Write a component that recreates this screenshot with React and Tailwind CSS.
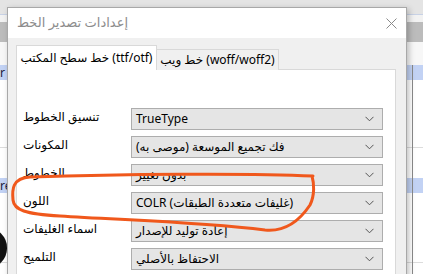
import React from 'react';

const FONT = { fontFamily: '"Segoe UI", "Noto Sans", "DejaVu Sans", sans-serif' };

// صفوف الإعدادات
const ROWS = [
    { label: 'تنسيق الخطوط', value: 'TrueType' },
    { label: 'المكونات', value: 'فك تجميع الموسعة (موصى به)' },
    { label: 'الخطوط', value: 'بدون تغيير' },
    { label: 'اللون', value: 'COLR (غليفات متعددة الطبقات)' },
    { label: 'اسماء الغليفات', value: 'إعادة توليد للإصدار' },
    { label: 'التلميح', value: 'الاحتفاظ بالأصلي' },
];

function Chevron() {
    return (
        <svg width="9" height="6" viewBox="0 0 9 6" className="shrink-0">
            <path d="M0.5 0.8 L4.5 4.8 L8.5 0.8" fill="none" stroke="#555" strokeWidth="1" />
        </svg>
    );
}

function Select({ value }) {
    return (
        <div className="w-[252px] h-[22px] bg-[#e5e5e5] border border-[#adadad] flex items-center justify-between pl-[4px] pr-[8px]">
            <span className="text-[12px] text-black leading-none whitespace-nowrap">{value}</span>
            <Chevron />
        </div>
    );
}

export default function App() {
    return (
        <div className="relative w-[423px] h-[274px] overflow-hidden bg-white" style={FONT}>
            {/* التطبيق في الخلفية */}
            <div className="flex flex-col w-full">
                <div className="h-[14px] bg-[#e4e4e4]" />
                <div className="h-[8px] bg-[#f2f2f2] border-t border-[#c8d2e6]" />
                <div className="h-[20px] bg-[#bcbcbc]" />
                <div className="h-[23px] bg-[#f7f7f7]" />
                <div className="h-[15px] bg-[#c2d2f4] flex items-center text-[12px] text-[#1a1a3a] pl-0">r</div>
                <div className="h-[68px] bg-white border-b border-[#dcdcdc]" />
                <div className="h-[30px] bg-white" />
                <div className="h-[15px] bg-[#c2d2f4] flex items-center text-[12px] text-[#1a1a3a]">re</div>
                <div className="h-[70px] bg-white border-b border-[#dcdcdc]" />
            </div>
            <div className="absolute left-[412px] top-[65px] w-px h-[209px] bg-[#8a8a8a]" />
            <div className="absolute left-[-32px] top-[228px] w-[39px] h-[40px] rounded-full bg-[#111]" />

            {/* نافذة الحوار */}
            <div className="absolute left-[7px] top-[7px] w-[400px] h-[290px] border border-[#a8a8a8] bg-[#f0f0f0] shadow-[2px_2px_6px_rgba(0,0,0,0.25)] flex flex-col">
                <div className="h-[30px] bg-white flex items-center justify-between pl-[9px] pr-[9px]">
                    <span className="text-[13px] text-[#8c8c8c]">إعدادات تصدير الخط</span>
                    <svg width="11" height="11" viewBox="0 0 11 11">
                        <path d="M0.5 0.5 L10.5 10.5 M10.5 0.5 L0.5 10.5" stroke="#8a8a8a" strokeWidth="1" />
                    </svg>
                </div>
                <div className="flex flex-col pl-[8px] pr-[10px] pt-[7px]">
                    <div className="flex items-end relative z-10">
                        <div className="w-[141px] h-[25px] bg-white border border-[#d9d9d9] border-b-0 flex items-center justify-center text-[12px] text-black whitespace-nowrap">
                            خط سطح المكتب (ttf/otf)
                        </div>
                        <div className="w-[122px] h-[21px] bg-[#f0f0f0] border border-[#d9d9d9] border-l-0 border-b-0 flex items-center justify-center text-[12px] text-black whitespace-nowrap">
                            خط ويب (woff/woff2)
                        </div>
                    </div>
                    <div className="-mt-px h-[220px] bg-white border border-[#d9d9d9] pt-[38px] pl-[6px] flex flex-col gap-[6px]">
                        {ROWS.map((row) => (
                            <div key={row.label} className="flex items-center">
                                <span className="w-[108px] pb-[5px] text-[12px] text-black leading-none whitespace-nowrap">{row.label}</span>
                                <Select value={row.value} />
                            </div>
                        ))}
                    </div>
                </div>
            </div>

            {/* التعليق البرتقالي */}
            <svg className="absolute left-0 top-0 pointer-events-none" width="423" height="274" viewBox="0 0 423 274">
                <path
                    d="M313 176 C250 173, 120 174, 30 177 C12 178, 12 190, 13 200 C14 210, 25 214, 60 216 C120 220, 200 222, 265 230 C285 232, 300 220, 310 205 C315 195, 314 183, 312 176"
                    fill="none"
                    stroke="#f0581c"
                    strokeWidth="3"
                    strokeLinecap="round"
                    strokeLinejoin="round"
                />
            </svg>
        </div>
    );
}
